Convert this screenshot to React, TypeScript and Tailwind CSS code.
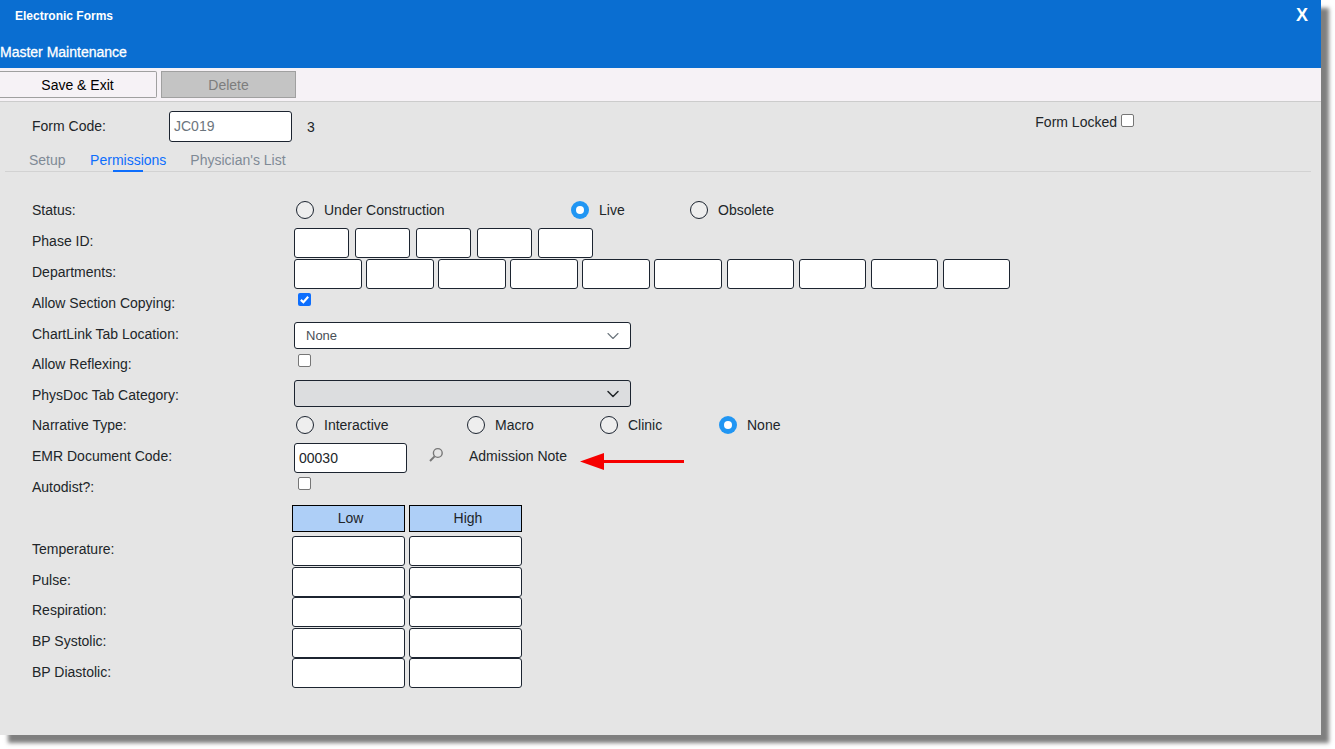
import { ChevronDown } from 'lucide-react';

const inputCls = 'h-[30px] rounded-[3px] border border-[#1c2430] bg-white';

function Radio({ label, checked, width }: { label: string; checked?: boolean; width: string }) {
  return (
    <div className={`flex items-center ${width}`}>
      {checked ? (
        <span className="flex h-[18px] w-[18px] items-center justify-center rounded-full bg-[#2196f3]">
          <span className="h-[8px] w-[8px] rounded-full bg-white" />
        </span>
      ) : (
        <span className="h-[18px] w-[18px] rounded-full border border-[#1c2430] bg-[#eeeeee]" />
      )}
      <span className="ml-[10px] text-[14px] leading-none text-[#212529]">{label}</span>
    </div>
  );
}

function Checkbox({ checked }: { checked?: boolean }) {
  if (checked) {
    return (
      <span className="flex h-[13px] w-[13px] items-center justify-center rounded-[2px] bg-[#0d6efd]">
        <svg viewBox="0 0 12 12" className="h-[11px] w-[11px]" fill="none" stroke="white" strokeWidth="2.4">
          <path d="M2 6.4 L4.8 9 L10 3" />
        </svg>
      </span>
    );
  }
  return <span className="block h-[13px] w-[13px] rounded-[2px] border border-[#767676] bg-white" />;
}

function Row({ label, height, children, labelClass }: { label?: string; height: string; children?: React.ReactNode; labelClass?: string }) {
  return (
    <div className={`flex ${height}`}>
      <div className={`w-[262px] shrink-0 pl-[32px] text-[14px] leading-none text-[#212529] ${labelClass ?? ''}`}>{label}</div>
      {children}
    </div>
  );
}

const phaseBoxes = [0, 1, 2, 3, 4];
const deptBoxes = [0, 1, 2, 3, 4, 5, 6, 7, 8, 9];
const vitals = [
  { label: 'Temperature:', pad: 'pt-[6px]' },
  { label: 'Pulse:', pad: 'pt-[6px]' },
  { label: 'Respiration:', pad: 'pt-[6px]' },
  { label: 'BP Systolic:', pad: 'pt-[6px]' },
  { label: 'BP Diastolic:', pad: 'pt-[7px]' },
];

export default function App() {
  return (
    <div className="h-[749px] w-[1335px] overflow-hidden bg-white font-['Liberation_Sans',Arial,sans-serif]">
      <div className="h-[735px] w-[1321px] bg-[#e5e5e5] shadow-[8px_8px_4px_rgba(0,0,0,0.5)]">
        <div className="h-[68px] bg-[#0a6ed1] text-white">
          <div className="flex h-[36px] items-start justify-between pl-[15px] pr-[13px]">
            <span className="pt-[9px] text-[12px] font-bold leading-[14px]">Electronic Forms</span>
            <span className="pt-[5px] text-[18px] font-bold leading-[20px]">X</span>
          </div>
          <div className="pt-[8px] text-[14px] leading-[16px] [-webkit-text-stroke:0.3px_white]">Master Maintenance</div>
        </div>

        <div className="flex h-[34px] gap-[4px] border-b border-[#cccccc] bg-[#f6f2f6] pt-[3px]">
          <button className="h-[27px] w-[157px] rounded-r-[2px] border border-l-0 border-[#a0a0a0] bg-[#f6f2f6] pr-[1px] text-[14px] leading-none text-black">
            Save &amp; Exit
          </button>
          <button className="h-[27px] w-[135px] border border-[#a0a0a0] bg-[#c4c4c4] text-[14px] leading-none text-[#7d7d7d]">
            Delete
          </button>
        </div>

        <div className="flex h-[41px] items-start pt-[9px]">
          <div className="w-[169px] pl-[32px] pt-[8px] text-[14px] leading-none text-[#212529]">Form Code:</div>
          <div className="flex h-[31px] w-[123px] items-center rounded-[3px] border border-[#1c2430] bg-white pl-[4px] text-[14px] text-[#6c757d]">
            JC019
          </div>
          <div className="ml-[15px] pt-[9px] text-[14px] leading-none text-[#212529]">3</div>
          <div className="ml-auto mr-[187px] flex items-start">
            <span className="pt-[4px] text-[14px] leading-none text-[#212529]">Form Locked</span>
            <span className="ml-[4px] mt-[3px]"><Checkbox /></span>
          </div>
        </div>

        <div className="mx-[5px] flex h-[29px] w-[1306px] items-start border-b border-[#d2d2d2] pt-[10px] text-[14px] leading-none text-[#7f8a96]">
          <span className="ml-[24px]">Setup</span>
          <span className="relative ml-[24.5px] text-[#0d6efd]">
            Permissions
            <span className="absolute left-[23px] top-[17px] h-[2px] w-[30px] bg-[#0d6efd]" />
          </span>
          <span className="ml-[24px]">Physician's List</span>
        </div>

        <div className="pt-[23px]">
          <Row label="Status:" height="h-[33px]" labelClass="pt-[8px]">
            <div className="flex h-[18px] items-center pl-[34px] pt-[12px]">
              <Radio label="Under Construction" width="w-[275px]" />
              <Radio label="Live" width="w-[119px]" checked />
              <Radio label="Obsolete" width="w-[120px]" />
            </div>
          </Row>
          <Row label="Phase ID:" height="h-[31px]" labelClass="pt-[6px]">
            <div className="flex gap-[5.5px] pl-[32px]">
              {phaseBoxes.map((b) => <div key={b} className={`${inputCls} w-[55.4px]`} />)}
            </div>
          </Row>
          <Row label="Departments:" height="h-[31px]" labelClass="pt-[6px]">
            <div className="flex gap-[4.6px] pl-[32px]">
              {deptBoxes.map((b) => <div key={b} className={`${inputCls} w-[67.5px]`} />)}
            </div>
          </Row>
          <Row label="Allow Section Copying:" height="h-[32px]" labelClass="pt-[6px]">
            <div className="pl-[36px] pt-[3px]"><Checkbox checked /></div>
          </Row>
          <Row label="ChartLink Tab Location:" height="h-[31px]" labelClass="pt-[5px]">
            <div className="ml-[32px] flex h-[27px] w-[337px] items-center justify-between rounded-[3px] border border-[#1c2430] bg-white pl-[11px] pr-[7px] text-[13px] text-[#495057]">
              None
              <ChevronDown size={20} strokeWidth={1.3} className="text-[#6c757d]" />
            </div>
          </Row>
          <Row label="Allow Reflexing:" height="h-[27px]" labelClass="pt-[4px]">
            <div className="pl-[36px] pt-[1px]"><Checkbox /></div>
          </Row>
          <Row label="PhysDoc Tab Category:" height="h-[36px]" labelClass="pt-[8px]">
            <div className="ml-[32px] flex h-[27px] w-[337px] items-center justify-end rounded-[3px] border border-[#1c2430] bg-[#dcdddf] pr-[7px]">
              <ChevronDown size={20} strokeWidth={1.8} className="text-[#212529]" />
            </div>
          </Row>
          <Row label="Narrative Type:" height="h-[27px]" labelClass="pt-[2px]">
            <div className="flex h-[18px] items-center pl-[34px]">
              <Radio label="Interactive" width="w-[171px]" />
              <Radio label="Macro" width="w-[133px]" />
              <Radio label="Clinic" width="w-[119px]" />
              <Radio label="None" width="w-[100px]" checked />
            </div>
          </Row>
          <Row label="EMR Document Code:" height="h-[31px]" labelClass="pt-[6px]">
            <div className="ml-[32px] flex h-[30px] w-[113px] items-center rounded-[3px] border border-[#1c2430] bg-white pl-[4px] text-[14px] text-[#212529]">
              00030
            </div>
            <svg viewBox="0 0 16 16" className="ml-[21px] mt-[4px] h-[16px] w-[16px]" fill="none" stroke="#777777">
              <circle cx="9.8" cy="6" r="4.4" strokeWidth="1.4" />
              <path d="M6.6 9.4 L2 14" strokeWidth="2" />
            </svg>
            <span className="ml-[25px] pt-[6px] text-[14px] leading-none text-[#212529]">Admission Note</span>
            <svg viewBox="0 0 104 19" className="ml-[13px] mt-[9px] h-[19px] w-[104px]">
              <path d="M0 9.5 L24 1 L24 8 L104 8 L104 11 L24 11 L24 18 Z" fill="#f60000" />
            </svg>
          </Row>
          <Row label="Autodist?:" height="h-[31px]" labelClass="pt-[6px]">
            <div className="pl-[36px] pt-[3px]"><Checkbox /></div>
          </Row>
          <Row height="h-[31px]">
            <div className="ml-[30px] flex gap-[4px]">
              <div className="flex h-[27px] w-[113px] items-center justify-center border border-black bg-[#aecff7] pl-[4px] text-[14px] text-[#212529]">Low</div>
              <div className="flex h-[27px] w-[113px] items-center justify-center border border-black bg-[#aecff7] pl-[5px] text-[14px] text-[#212529]">High</div>
            </div>
          </Row>
          {vitals.map((v) => (
            <Row key={v.label} label={v.label} height="h-[30.5px]" labelClass={v.pad}>
              <div className="ml-[30px] flex gap-[4px]">
                <div className={`${inputCls} w-[113px]`} />
                <div className={`${inputCls} w-[113px]`} />
              </div>
            </Row>
          ))}
        </div>
      </div>
    </div>
  );
}
